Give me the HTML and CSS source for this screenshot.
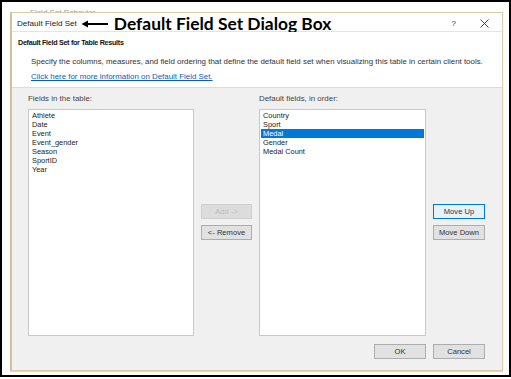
FILE: index.html
```html
<!DOCTYPE html>
<html>
<head>
<meta charset="utf-8">
<link rel="stylesheet" href="styles.css">
</head>
<body>
<div class="frame">
  <div class="bg-text">Field Set Behavior</div>
  <div class="dialog">
    <div class="titlebar">
      <span class="title">Default Field Set</span>
      <svg class="arrow" width="27" height="10" viewBox="0 0 27 10"><path d="M0.5 5 L7 1.5 L7 8.5 Z" fill="#000"/><rect x="6" y="4" width="21" height="2" fill="#000"/></svg>
      <span class="annotation">Default Field Set Dialog Box</span>
      <span class="spacer"></span>
      <span class="help">?</span>
      <svg class="close" width="9" height="9" viewBox="0 0 9 9"><path d="M0.5 0.5 L8.5 8.5 M8.5 0.5 L0.5 8.5" stroke="#333" stroke-width="0.9"/></svg>
    </div>
    <div class="header">
      <div class="h-title">Default Field Set for Table Results</div>
      <div class="h-desc">Specify the columns, measures, and field ordering that define the default field set when visualizing this table in certain client tools.</div>
      <div class="h-link">Click here for more information on Default Field Set.</div>
    </div>
    <div class="main">
      <div class="grid">
        <div class="label">Fields in the table:</div>
        <div></div>
        <div class="label">Default fields, in order:</div>
        <div></div>
        <div class="list">
          <div class="item">Athlete</div>
          <div class="item">Date</div>
          <div class="item">Event</div>
          <div class="item">Event_gender</div>
          <div class="item">Season</div>
          <div class="item">SportID</div>
          <div class="item">Year</div>
        </div>
        <div class="btncol">
          <div class="btn disabled">Add -&gt;</div>
          <div class="btn">&lt;- Remove</div>
        </div>
        <div class="list">
          <div class="item">Country</div>
          <div class="item">Sport</div>
          <div class="item selected">Medal</div>
          <div class="item">Gender</div>
          <div class="item">Medal Count</div>
        </div>
        <div class="btncol">
          <div class="btn focused">Move Up</div>
          <div class="btn">Move Down</div>
        </div>
      </div>
      <div class="footer">
        <div class="btn">OK</div>
        <div class="btn">Cancel</div>
      </div>
    </div>
  </div>
</div>
</body>
</html>
```
FILE: styles.css
```css
html, body { margin: 0; padding: 0; background: #fff; }
body { font-family: "Liberation Sans", Arial, sans-serif; color: #222; }
.frame {
  position: relative;
  width: 511px; height: 377px;
  box-sizing: border-box;
  border: 2px solid #000;
  background: #fff;
  padding: 10px 0 0 8px;
}
.bg-text {
  position: absolute; left: 28px; top: 6px;
  font-size: 8px; color: #9a9a9a;
}
.dialog {
  position: relative;
  width: 493px; height: 359px;
  box-sizing: border-box;
  border: 1px solid #dccba8;
  border-left: 2px solid #d3c19b;
  background: #f0f0f0;
  display: flex; flex-direction: column;
  box-shadow: 0 1px 1px #e6d9bf;
}
.titlebar {
  height: 19px; box-sizing: border-box;
  background: #fff;
  border-bottom: 1px solid #e4e4e4;
  display: flex; align-items: center;
  padding: 2px 13px 0 5px;
}
.title { font-size: 8.1px; color: #222; }
.arrow { margin-left: 4px; margin-top: 1px; }
.annotation {
  margin-left: 6px;
  font-family: Lato, "Liberation Sans", sans-serif;
  font-weight: 700; font-size: 17.4px; color: #000;
  line-height: 19px; white-space: nowrap;
}
.spacer { flex: 1; }
.help { font-size: 8px; color: #333; margin-right: 24px; }
.close { margin-top: 1px; }
.header {
  height: 56px; box-sizing: border-box;
  background: #fff;
  border-bottom: 1px solid #dcdcdc;
  padding: 6px 0 0 6px;
}
.h-title { font-size: 7.2px; font-weight: 700; color: #111; line-height: 10px; letter-spacing: -0.3px; }
.h-desc { font-size: 7.9px; color: #333; line-height: 10px; margin: 9px 0 0 13px; white-space: nowrap; }
.h-link { font-size: 7.9px; color: #0b5cc4; text-decoration: underline; line-height: 10px; margin: 5px 0 0 13px; }
.main { flex: 1; padding: 6px 17px 0 16px; display: flex; flex-direction: column; }
.grid {
  display: grid;
  grid-template-columns: 166px 51px 167px 52px;
  grid-template-rows: 15px 227px;
  column-gap: 7px;
}
.label { font-size: 7.9px; color: #444; line-height: 10px; }
.list {
  background: #fff;
  border: 1px solid #c8c8c8;
  box-sizing: border-box;
  padding: 1px 1px;
}
.item { font-size: 7.4px; line-height: 9px; height: 9px; padding-left: 2px; color: #222; white-space: nowrap; }
.item.selected { background: #0078d7; color: #fff; }
.btncol { display: flex; flex-direction: column; gap: 6px; padding-top: 95px; }
.btn {
  height: 15px; box-sizing: border-box;
  background: #e1e1e1;
  border: 1px solid #adadad;
  font-size: 7.6px; color: #333;
  display: flex; align-items: center; justify-content: center;
}
.btn.disabled { background: #dcdcdc; border-color: #cfcfcf; color: #bdbdbd; }
.btn.focused { border-color: #0078d7; background: #e5f1fb; }
.footer { display: flex; justify-content: flex-end; gap: 7px; margin-top: 8px; }
.footer .btn { width: 52px; }
```
